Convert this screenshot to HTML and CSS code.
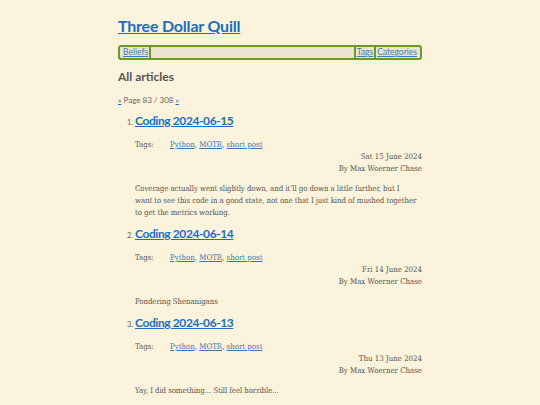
FILE: index.html
```html
<!DOCTYPE html>
<html>
<head>
<meta charset="utf-8">
<link rel="stylesheet" href="styles.css">
</head>
<body>
<div class="page">
  <header class="site-header">
    <h1 class="site-title"><a href="#">Three Dollar Quill</a></h1>
    <nav class="nav">
      <a class="nav-item nav-first" href="#">Beliefs</a>
      <span class="nav-spacer"></span>
      <a class="nav-item nav-sep" href="#">Tags</a>
      <a class="nav-item nav-sep" href="#">Categories</a>
    </nav>
  </header>
  <main>
    <h2 class="section-title">All articles</h2>
    <p class="pager"><a href="#">«</a> Page 83 / 308 <a href="#">»</a></p>
    <ol class="articles">
      <li class="article">
        <h3 class="article-title"><a href="#">Coding 2024-06-15</a></h3>
        <div class="tags"><span class="tags-label">Tags:</span><span class="tags-list"><a href="#">Python</a>, <a href="#">MOTR</a>, <a href="#">short post</a></span></div>
        <div class="meta"><div>Sat 15 June 2024</div><div>By Max Woerner Chase</div></div>
        <p class="summary">Coverage actually went slightly down, and it’ll go down a little further, but I<br>want to see this code in a good state, not one that I just kind of mushed together to get the metrics working.</p>
      </li>
      <li class="article">
        <h3 class="article-title"><a href="#">Coding 2024-06-14</a></h3>
        <div class="tags"><span class="tags-label">Tags:</span><span class="tags-list"><a href="#">Python</a>, <a href="#">MOTR</a>, <a href="#">short post</a></span></div>
        <div class="meta"><div>Fri 14 June 2024</div><div>By Max Woerner Chase</div></div>
        <p class="summary">Pondering Shenanigans</p>
      </li>
      <li class="article">
        <h3 class="article-title"><a href="#">Coding 2024-06-13</a></h3>
        <div class="tags"><span class="tags-label">Tags:</span><span class="tags-list"><a href="#">Python</a>, <a href="#">MOTR</a>, <a href="#">short post</a></span></div>
        <div class="meta"><div>Thu 13 June 2024</div><div>By Max Woerner Chase</div></div>
        <p class="summary">Yay, I did something... Still feel horrible...</p>
      </li>
    </ol>
  </main>
</div>
</body>
</html>
```
FILE: styles.css
```css
html, body {
  margin: 0;
  padding: 0;
  background: #fbf3dc;
}
body {
  font-family: "DejaVu Serif Condensed", "DejaVu Serif", serif;
  color: #555;
  font-size: 7.8px;
}
a { color: #1f6fb8; }
.page {
  width: 304px;
  margin: 0 auto;
  padding-top: 14px;
}
.site-title {
  margin: 0;
  font-family: Lato, sans-serif;
  font-size: 16px;
  line-height: 24px;
  font-weight: 700;
  letter-spacing: -0.2px;
}
.site-title a { color: #1a6fc0; }
.nav {
  display: flex;
  margin-top: 7px;
  height: 11px;
  border: 2px solid #6b9a22;
  border-radius: 3px;
  background: #ebe3cf;
  font-family: Lato, sans-serif;
  font-size: 8.5px;
  line-height: 11px;
  padding: 0 2px;
}
.nav-item { color: #3f7fb8; padding: 0 1px; }
.nav-first { border-right: 2px solid #6b9a22; padding-right: 1px; }
.nav-spacer { flex: 1; }
.nav-sep { border-left: 2px solid #6b9a22; padding-left: 1px; }
.section-title {
  margin: 9px 0 0;
  font-family: Lato, sans-serif;
  font-size: 12px;
  line-height: 16px;
  font-weight: 700;
  color: #555;
}
.pager {
  margin: 10px 0 0;
  font-family: Lato, sans-serif;
  font-size: 8px;
  line-height: 10px;
  color: #666;
}
.articles {
  margin: 7px 0 0;
  padding-left: 17px;
}
.article { margin-bottom: 6px; }
.article::marker {
  font-family: Lato, sans-serif;
  font-size: 7.5px;
  color: #666;
}
.article-title {
  margin: 0;
  font-family: Lato, sans-serif;
  font-size: 12px;
  line-height: 18px;
  font-weight: 700;
  letter-spacing: -0.4px;
}
.article-title a { color: #1a6fc0; }
.tags {
  display: flex;
  margin-top: 9px;
  line-height: 12px;
}
.tags-label { width: 35px; }
.tags a { color: #3a78b5; }
.meta {
  text-align: right;
  line-height: 12px;
}
.summary {
  margin: 8px 0 0;
  line-height: 12px;
  letter-spacing: -0.08px;
}
```
